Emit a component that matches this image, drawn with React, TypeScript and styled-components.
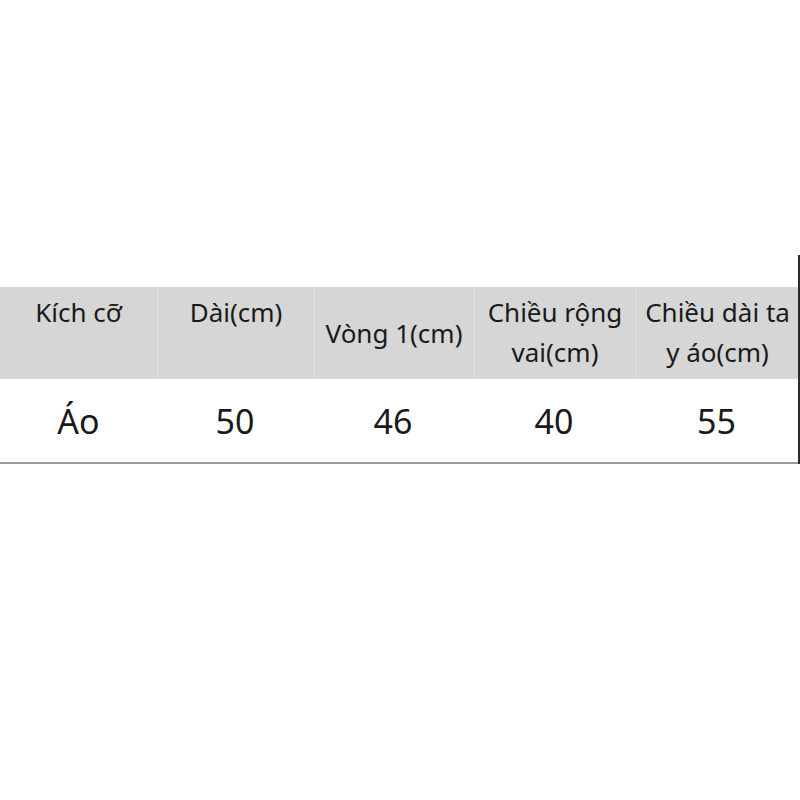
import React from "react";
import styled, { createGlobalStyle } from "styled-components";

const Global = createGlobalStyle`
  html, body { margin: 0; padding: 0; background: #ffffff; }
  body { font-family: "Noto Sans", "Open Sans", sans-serif; color: #1a1a1a; }
`;

const Page = styled.div`
  width: 800px;
  height: 800px;
  padding-top: 255px;
  box-sizing: border-box;
`;

const Frame = styled.div`
  padding-top: 32px;
  border-right: 2px solid #2a2a2a;
  box-sizing: border-box;
  width: 800px;
`;

const Grid = styled.div`
  display: grid;
  grid-template-columns: 157px 156px 160px 162px 1fr;
  border-bottom: 2px solid #9a9a9a;
`;

const HeadCell = styled.div<{ $align: "top" | "middle"; $first?: boolean }>`
  background: #d6d6d6;
  height: 92px;
  box-sizing: border-box;
  border-left: ${(p) => (p.$first ? "none" : "2px solid #dcdcdc")};
  display: flex;
  flex-direction: column;
  align-items: center;
  justify-content: ${(p) => (p.$align === "top" ? "flex-start" : "center")};
  padding-top: ${(p) => (p.$align === "top" ? "5px" : "0")};
  font-size: 26px;
  line-height: 40px;
  text-align: center;
  white-space: nowrap;
`;

const BodyCell = styled.div`
  height: 83px;
  display: flex;
  align-items: center;
  justify-content: center;
  font-size: 34px;
  box-sizing: border-box;
`;

const headers: { lines: string[]; align: "top" | "middle" }[] = [
  { lines: ["Kích cỡ"], align: "top" },
  { lines: ["Dài(cm)"], align: "top" },
  { lines: ["Vòng 1(cm)"], align: "middle" },
  { lines: ["Chiều rộng", "vai(cm)"], align: "top" },
  { lines: ["Chiều dài ta", "y áo(cm)"], align: "top" },
];

const values = ["Áo", "50", "46", "40", "55"];

export default function App() {
  return (
    <>
      <Global />
      <Page>
        <Frame>
          <Grid>
            {headers.map((h, i) => (
              <HeadCell key={i} $align={h.align} $first={i === 0}>
                {h.lines.map((l, j) => (
                  <span key={j}>{l}</span>
                ))}
              </HeadCell>
            ))}
            {values.map((v, i) => (
              <BodyCell key={i}>{v}</BodyCell>
            ))}
          </Grid>
        </Frame>
      </Page>
    </>
  );
}
